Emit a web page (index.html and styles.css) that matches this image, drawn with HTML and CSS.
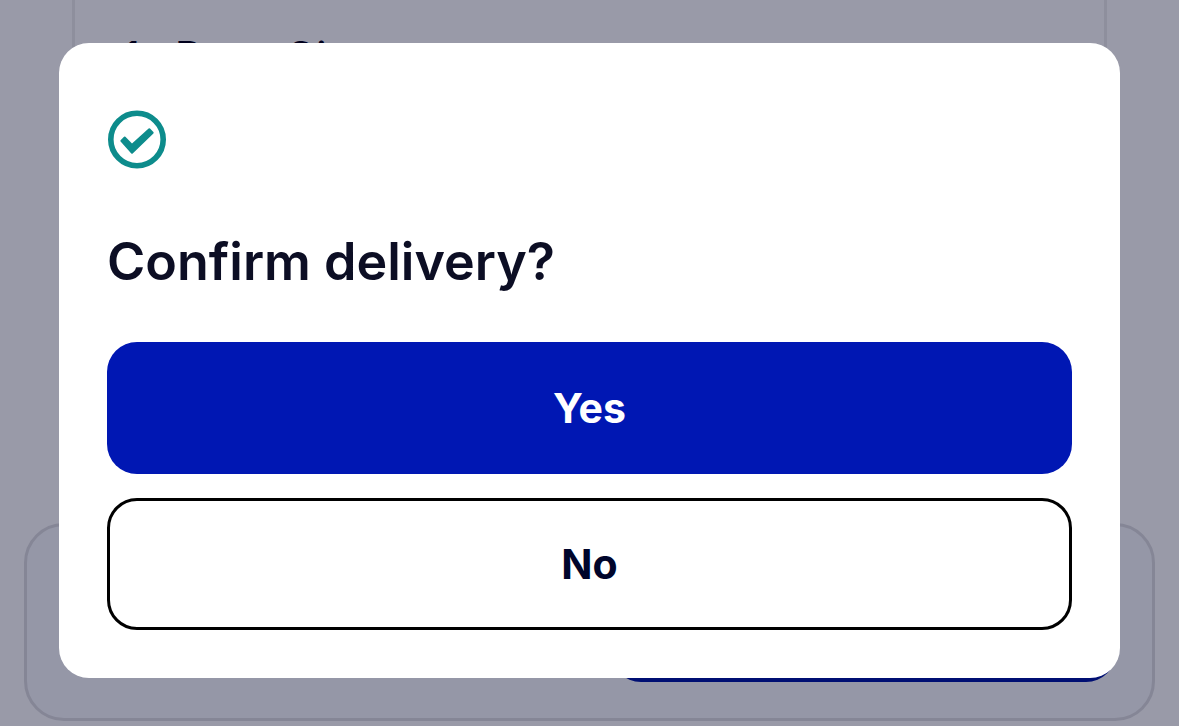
FILE: index.html
```html
<!DOCTYPE html>
<html lang="en">
<head>
<meta charset="utf-8">
<meta name="viewport" content="width=device-width, initial-scale=1">
<title>Confirm delivery</title>
<link rel="stylesheet" href="styles.css">
</head>
<body>
<main class="page">
  <section class="order">
    <p class="order-item">1x Rose Gin</p>
  </section>
  <section class="actions">
    <button class="deliver" type="button" aria-label="Deliver"></button>
  </section>
</main>
<div class="overlay">
  <div class="dialog" role="dialog" aria-modal="true" aria-labelledby="dialog-title">
    <svg class="dialog-icon" viewBox="0 0 60 60" aria-hidden="true">
      <circle cx="30" cy="29.5" r="26.2" fill="none" stroke="#0d8c8c" stroke-width="5.6"/>
      <path d="M13.6 30.2 17 26.8Q17.7 26.2 18.4 26.8L25 33.4 41.6 18.6Q42.3 18 43 18.6L46.4 22Q47 22.7 46.4 23.4L25.7 43.4Q25 44 24.3 43.4L13.6 31.6Q13 30.9 13.6 30.2Z" fill="#0d8c8c"/>
    </svg>
    <h1 class="dialog-title" id="dialog-title">Confirm delivery?</h1>
    <div class="dialog-buttons">
      <button class="button button-primary" type="button">Yes</button>
      <button class="button button-outline" type="button">No</button>
    </div>
  </div>
</div>
</body>
</html>
```
FILE: styles.css
```css
* {
  box-sizing: border-box;
}

body {
  margin: 0;
  font-family: Inter, "Liberation Sans", sans-serif;
  color: #00001c;
  background: #999aa8;
}

.page {
  display: flex;
  flex-direction: column;
  height: 100vh;
  padding: 0 24px 5px;
  overflow: hidden;
}

.order {
  flex: 1;
  margin: 0 48px;
  padding: 33px 48px 0;
  border: solid #8e8f9d;
  border-width: 0 3px;
}

.order-item {
  margin: 0;
  font-size: 42px;
  line-height: 48px;
}

.actions {
  display: flex;
  justify-content: flex-end;
  align-items: flex-end;
  height: 198px;
  padding: 36px;
  border: 3px solid #858696;
  border-radius: 40px;
  background: #9597a7;
}

.deliver {
  width: 48%;
  height: 100%;
  border: 0;
  border-radius: 30px;
  background: #000f73;
}

.overlay {
  position: fixed;
  inset: 0;
  padding: 43px 59px 48px;
}

.dialog {
  display: flex;
  flex-direction: column;
  padding: 67px 48px 48px;
  border-radius: 30px;
  background: #fff;
}

.dialog-icon {
  width: 60px;
  height: 60px;
}

.dialog-title {
  margin: 56px 0 44px;
  font-size: 52px;
  font-weight: 600;
  line-height: 72px;
  color: #0c0e24;
}

.dialog-buttons {
  display: flex;
  flex-direction: column;
  gap: 24px;
}

.button {
  height: 132px;
  border: 0;
  border-radius: 30px;
  font: 700 41px/48px Inter, "Liberation Sans", sans-serif;
}

.button-primary {
  color: #fff;
  background: #0017b3;
}

.button-outline {
  border: 3px solid #000;
  color: #00052b;
  background: #fff;
}
```
